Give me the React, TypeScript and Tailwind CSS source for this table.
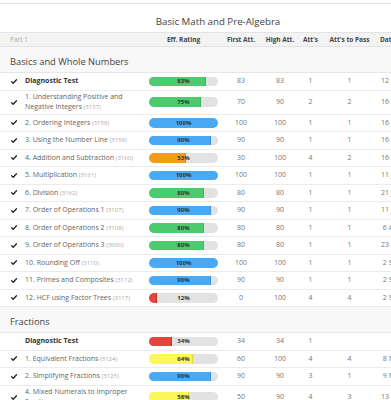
import React from "react";

type Row = {
  name: string;
  code?: string;
  bold?: boolean;
  check?: boolean;
  pct: number;
  color: "green" | "blue" | "orange" | "red" | "yellow";
  first: string;
  high: string;
  atts: string;
  pass: string;
  date: string;
};

const fills: Record<Row["color"], string> = {
  green: "bg-[#4ccb6e] border-[#3fb05d]",
  blue: "bg-[#48a9f5] border-[#3a93da]",
  orange: "bg-[#f39c1c] border-[#d9870f]",
  red: "bg-[#e5463c] border-[#c23329]",
  yellow: "bg-[#fbf75a] border-[#e2dd3f]",
};

const basics: Row[] = [
  { name: "Diagnostic Test", bold: true, check: true, pct: 83, color: "green", first: "83", high: "83", atts: "1", pass: "1", date: "12 May 2019" },
  { name: "1. Understanding Positive and Negative Integers", code: "(3157)", check: true, pct: 75, color: "green", first: "70", high: "90", atts: "2", pass: "2", date: "16 May 2019" },
  { name: "2. Ordering Integers", code: "(3158)", check: true, pct: 100, color: "blue", first: "100", high: "100", atts: "1", pass: "1", date: "16 May 2019" },
  { name: "3. Using the Number Line", code: "(3159)", check: true, pct: 90, color: "blue", first: "90", high: "90", atts: "1", pass: "1", date: "16 May 2019" },
  { name: "4. Addition and Subtraction", code: "(3160)", check: true, pct: 53, color: "orange", first: "30", high: "100", atts: "4", pass: "2", date: "16 May 2019" },
  { name: "5. Multiplication", code: "(3161)", check: true, pct: 100, color: "blue", first: "100", high: "100", atts: "1", pass: "1", date: "11 Jun 2019" },
  { name: "6. Division", code: "(3162)", check: true, pct: 80, color: "green", first: "80", high: "80", atts: "1", pass: "1", date: "21 Jun 2019" },
  { name: "7. Order of Operations 1", code: "(3107)", check: true, pct: 90, color: "blue", first: "90", high: "90", atts: "1", pass: "1", date: "11 Jul 2019" },
  { name: "8. Order of Operations 2", code: "(3108)", check: true, pct: 80, color: "green", first: "80", high: "80", atts: "1", pass: "1", date: " 6 Aug 2019" },
  { name: "9. Order of Operations 3", code: "(3600)", check: true, pct: 80, color: "green", first: "80", high: "80", atts: "1", pass: "1", date: "23 Aug 2019" },
  { name: "10. Rounding Off", code: "(3110)", check: true, pct: 100, color: "blue", first: "100", high: "100", atts: "1", pass: "1", date: " 2 Sep 2019" },
  { name: "11. Primes and Composites", code: "(3112)", check: true, pct: 90, color: "blue", first: "90", high: "90", atts: "1", pass: "1", date: " 2 Sep 2019" },
  { name: "12. HCF using Factor Trees", code: "(3117)", check: true, pct: 12, color: "red", first: "0", high: "100", atts: "4", pass: "4", date: " 2 Sep 2019" },
];

const fractions: Row[] = [
  { name: "Diagnostic Test", bold: true, check: false, pct: 34, color: "red", first: "34", high: "34", atts: "1", pass: "", date: "" },
  { name: "1. Equivalent Fractions", code: "(3124)", check: true, pct: 64, color: "yellow", first: "60", high: "100", atts: "4", pass: "4", date: " 8 Nov 2019" },
  { name: "2. Simplifying Fractions", code: "(3125)", check: true, pct: 90, color: "blue", first: "90", high: "90", atts: "3", pass: "1", date: " 9 Nov 2019" },
  { name: "4. Mixed Numerals to Improper Fractions", code: "(3126)", check: true, pct: 58, color: "yellow", first: "50", high: "90", atts: "4", pass: "3", date: "13 Nov 2019" },
];

function Check() {
  return (
    <svg width="6" height="5" viewBox="0 0 12 10" className="shrink-0">
      <path d="M1 5.2 L4.4 8.6 L11 1.4" fill="none" stroke="#222" strokeWidth="2.6" strokeLinecap="round" strokeLinejoin="round" />
    </svg>
  );
}

function Bar({ pct, color }: { pct: number; color: Row["color"] }) {
  return (
    <div className="relative ml-[4px] h-[9.5px] w-[69px] overflow-hidden rounded-full bg-[#e2e2e2]">
      <div className={`h-full ${fills[color]} ${pct < 100 ? "border-r" : ""}`} style={{ width: `${pct}%` }} />
      <span className="absolute inset-0 flex items-center justify-center text-[6px] font-bold leading-none text-[#333]">{pct}%</span>
    </div>
  );
}

function DataRow({ r }: { r: Row }) {
  return (
    <div className="flex min-h-[17.5px] items-center border-b border-[#ebebeb]">
      <div className="flex w-[145px] shrink-0 items-center py-[1.5px] pl-[11px] pr-[5px]">
        <div className="mr-[8px] flex w-[6px] shrink-0 justify-center">{r.check ? <Check /> : null}</div>
        <div className={`text-[7px] leading-[10px] ${r.bold ? "font-bold text-[#333]" : "text-[#666]"}`}>
          {r.name}
          {r.code ? <span className="text-[6px] text-[#aaa]"> {r.code}</span> : null}
        </div>
      </div>
      <div className="w-[77px] shrink-0">
        <Bar pct={r.pct} color={r.color} />
      </div>
      <div className="w-[38px] shrink-0 text-center text-[7px] text-[#777]">{r.first}</div>
      <div className="w-[40px] shrink-0 text-center text-[7px] text-[#777]">{r.high}</div>
      <div className="w-[21px] shrink-0 text-center text-[7px] text-[#777]">{r.atts}</div>
      <div className="w-[57px] shrink-0 text-center text-[7px] text-[#777]">{r.pass}</div>
      <div className="w-[58px] shrink-0 whitespace-pre pl-[3px] text-[7px] text-[#777]">{r.date}</div>
    </div>
  );
}

function Section({ title }: { title: string }) {
  return (
    <div className="border-b border-[#e6e6e6] bg-[#f8f8f8] pb-[4px] pl-[10px] pt-[9px] text-[9.3px] leading-[12px] text-[#444]">
      {title}
    </div>
  );
}

export default function App() {
  return (
    <div className="h-[400px] w-[391px] overflow-hidden bg-white font-['Open_Sans',sans-serif]">
      <div className="h-[3px]" />
      <div className="w-[436px] border-t border-[#e4e4e4]">
        <div className="pb-[4px] pt-[12px] text-center text-[9.7px] leading-[12px] text-[#444]">Basic Math and Pre-Algebra</div>
        <div className="flex h-[15px] items-center border-y border-[#e3e3e3] bg-[#f3f3f3] text-[6.5px]">
          <div className="w-[145px] shrink-0 pl-[10px] text-[#aaa]">Part 1</div>
          <div className="w-[77px] shrink-0 text-center font-bold text-[#444]">Eff. Rating</div>
          <div className="w-[38px] shrink-0 text-center font-bold text-[#444]">First Att.</div>
          <div className="w-[40px] shrink-0 text-center font-bold text-[#444]">High Att.</div>
          <div className="w-[21px] shrink-0 text-center font-bold text-[#444]">Att's</div>
          <div className="w-[57px] shrink-0 text-center font-bold text-[#444]">Att's to Pass</div>
          <div className="w-[58px] shrink-0 pl-[2px] font-bold text-[#444]">Date</div>
        </div>
        <Section title="Basics and Whole Numbers" />
        {basics.map((r, i) => (
          <DataRow key={"b" + i} r={r} />
        ))}
        <Section title="Fractions" />
        {fractions.map((r, i) => (
          <DataRow key={"f" + i} r={r} />
        ))}
      </div>
    </div>
  );
}
